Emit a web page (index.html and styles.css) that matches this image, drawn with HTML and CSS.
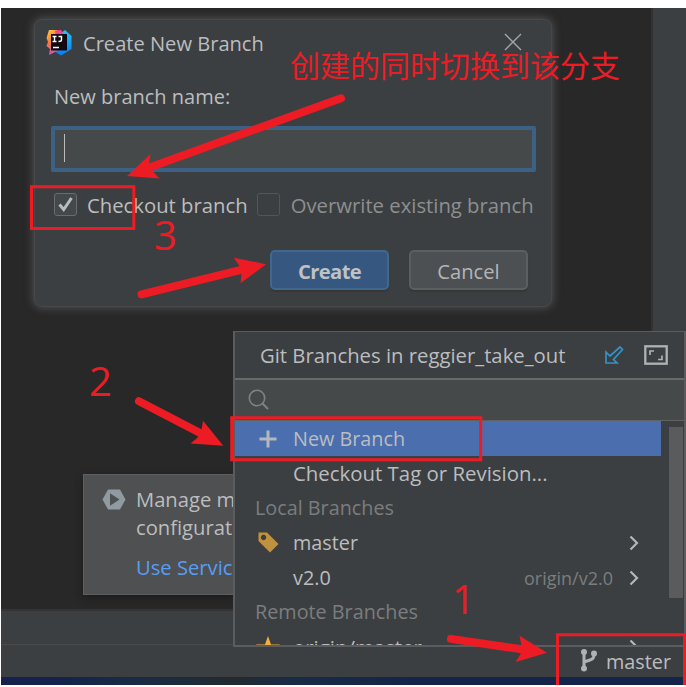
FILE: index.html
```html
<!DOCTYPE html>
<html lang="en">
<head>
<meta charset="utf-8">
<title>Create New Branch</title>
<link rel="stylesheet" href="styles.css">
</head>
<body>
<main class="ide">
  <div class="workspace">
    <div class="editor"></div>
    <div class="side-strip"></div>
  </div>
  <div class="tool-bar"></div>
  <footer class="status-bar">
    <svg class="branch-icon" width="18" height="24" viewBox="0 0 18 24">
      <path d="M4 4v16M14 5.500v1.500q0 4-4 5l-6 2" fill="none" stroke="#afb1b3" stroke-width="3"/>
      <circle cx="4" cy="4" r="3" fill="#afb1b3"/><circle cx="14" cy="5.500" r="3" fill="#afb1b3"/><circle cx="4" cy="20.500" r="3" fill="#afb1b3"/>
    </svg>
    <span class="branch-name">master</span>
  </footer>
  <div class="taskbar"></div>
</main>

<aside class="notice">
  <svg class="notice-icon" width="24" height="21" viewBox="0 0 24 21">
    <path d="M6 0.500h12l5.500 10L18 20.500H6L0.500 10.500z" fill="#8f9ba1"/>
    <path d="M8 4.200l9.500 6.200L8 16.700z" fill="#4e5052"/>
  </svg>
  <div class="notice-body">
    <p>Manage m</p>
    <p>configurat</p>
    <a class="notice-link">Use Servic</a>
  </div>
</aside>

<section class="dialog">
  <header class="dialog-title">
    <svg class="logo" width="26" height="27" viewBox="0 0 26 27">
      <defs>
        <linearGradient id="warm" x1="0" y1="0" x2="0.400" y2="1"><stop offset="0" stop-color="#fdd03b"/><stop offset="0.500" stop-color="#f97a3d"/><stop offset="1" stop-color="#c757bc"/></linearGradient>
        <linearGradient id="cool" x1="0" y1="0" x2="0" y2="1"><stop offset="0" stop-color="#21c8f5"/><stop offset="1" stop-color="#087cfa"/></linearGradient>
      </defs>
      <path d="M15 4l4-3 6.500 6v13L15 26.500l-6-4z" fill="url(#cool)"/>
      <path d="M3 1h8l3 4-3 17-8 4 1-6-3.500-3L2 13 .5 9z" fill="url(#warm)"/>
      <path d="M9 1.500l6-.5 3 5-8 3z" fill="#fe3f8f"/>
      <rect x="5" y="5" width="16" height="16.500" fill="#120a10"/>
      <path d="M6.500 7.500h4M8.500 7.500v5M6.500 12.500h4M12.500 7.500h3v3.500q0 1.500-3 1.500M7 18.500h6" fill="none" stroke="#fff" stroke-width="1.400"/>
    </svg>
    <h1>Create New Branch</h1>
    <svg class="close" width="18" height="18" viewBox="0 0 18 18"><path d="M1 1l16 16M17 1L1 17" stroke="#a3a5a6" stroke-width="1.400"/></svg>
  </header>
  <div class="dialog-body">
    <label class="name-label">New branch name:</label>
    <div class="name-input"><i class="caret"></i></div>
    <div class="checks">
      <span class="box"><svg width="21" height="21" viewBox="0 0 21 21"><path d="M4.500 10.500l4.200 5L16.500 4" fill="none" stroke="#b9bbbc" stroke-width="3"/></svg></span>
      <span class="check-label">Checkout branch</span>
      <span class="box box-off"></span>
      <span class="check-label label-off">Overwrite existing branch</span>
    </div>
    <div class="actions">
      <button class="btn btn-primary">Create</button>
      <button class="btn">Cancel</button>
    </div>
  </div>
</section>

<section class="popup">
  <header class="popup-head">
    <h2>Git Branches in reggier_take_out</h2>
    <svg class="fetch" width="20" height="20" viewBox="0 0 20 20"><path d="M2 7v11h11l-3.500-3.500L18.500 4.500 16 2 6 11z" fill="none" stroke="#3592c4" stroke-width="1.700"/><path d="M4 16L16 4.500" stroke="#3592c4" stroke-width="0"/></svg>
    <svg class="expand" width="24" height="20" viewBox="0 0 24 20"><rect x="1.300" y="1.300" width="21.400" height="17.400" fill="none" stroke="#afb1b3" stroke-width="2.300"/><path d="M6 10V6h4M18 10.500v4h-4" fill="none" stroke="#afb1b3" stroke-width="1.700"/></svg>
  </header>
  <div class="search">
    <svg width="21" height="21" viewBox="0 0 21 21"><circle cx="9" cy="9" r="7.700" fill="none" stroke="#7b8388" stroke-width="1.600"/><path d="M14 14l6 6" stroke="#7b8388" stroke-width="2"/></svg>
  </div>
  <div class="list">
    <div class="rows">
      <div class="row row-selected">
        <span class="icon"><svg width="18" height="18" viewBox="0 0 18 18"><path d="M9 .5v17M.5 9h17" stroke="#b4b7bd" stroke-width="3"/></svg></span>
        <span class="row-name">New Branch</span>
      </div>
      <div class="row"><span class="icon"></span><span class="row-name row-wide">Checkout Tag or Revision...</span></div>
      <div class="row row-group">Local Branches</div>
      <div class="row">
        <span class="icon"><svg width="21" height="21" viewBox="0 0 21 21"><path fill-rule="evenodd" d="M.5.500H9L20.500 12 12 20.500.5 9zM5.500 2.800a2.700 2.700 0 1 0 .1 0z" fill="#c0913f"/></svg></span>
        <span class="row-name">master</span>
        <svg class="chevron" width="10" height="16" viewBox="0 0 10 16"><path d="M1.500 1.500L8 8l-6.500 6.500" fill="none" stroke="#b4b6b8" stroke-width="2.200"/></svg>
      </div>
      <div class="row">
        <span class="icon"></span><span class="row-name">v2.0</span><span class="tracked">origin/v2.0</span>
        <svg class="chevron" width="10" height="16" viewBox="0 0 10 16"><path d="M1.500 1.500L8 8l-6.500 6.500" fill="none" stroke="#b4b6b8" stroke-width="2.200"/></svg>
      </div>
      <div class="row row-group">Remote Branches</div>
      <div class="row">
        <span class="icon"><svg width="24" height="23" viewBox="0 0 24 23"><path d="M12 0l3 8.500h9l-7.200 5.500L19.400 23 12 17.600 4.600 23l2.600-9L0 8.500h9z" fill="#f4af3d"/></svg></span>
        <span class="row-name row-wide">origin/master</span>
        <svg class="chevron" width="10" height="16" viewBox="0 0 10 16"><path d="M1.500 1.500L8 8l-6.500 6.500" fill="none" stroke="#b4b6b8" stroke-width="2.200"/></svg>
      </div>
    </div>
    <div class="scroll"><div class="thumb"></div></div>
  </div>
</section>

<svg class="marks" width="686" height="687" viewBox="0 0 686 687">
  <g fill="none" stroke="#ed1c24" stroke-width="3">
    <path d="M31.500 186.800h102.300v41.700H31.500zM231.700 417.800h249v42h-249zM557.500 685V634.800H684.500V685"/>
  </g>
  <g fill="none" stroke="#ed1c24" stroke-width="8" stroke-linecap="round">
    <path d="M341 98.300L148 168M141.500 294.300L244 269.200M139 401.200L203 434.500M451 638.900L525 649.800"/>
  </g>
  <g fill="#ed1c24">
    <path d="M127 176l23.500-22-1.500 9.500 4 8 6.500 7zM266 264.300l-32.200-6.600 5.700 8.300 2 7.500-1 9.800zM223.300 445.700l-20.300-25-1.500 9-4 8-7 5.800zM547 652.700l-27.500-17 2 9.500-1 9-5 7.800z"/>
  </g>
</svg>
<span class="note note-text">创建的同时切换到该分支</span>
<span class="note note-three">3</span>
<span class="note note-two">2</span>
<span class="note note-one">1</span>
</body>
</html>
```
FILE: styles.css
```css
* { box-sizing: border-box; margin: 0; padding: 0; }
body {
  width: 686px; height: 687px; overflow: hidden; position: relative;
  background: #fff; color: #bbbdbf;
  font: 20.2px/30px "Open Sans", "Noto Sans CJK SC", sans-serif;
  white-space: nowrap;
}
svg { display: block; flex: none; }

.ide { display: flex; flex-direction: column; height: 685px; padding: 8px 0 0 1px; }
.workspace { display: flex; flex: 1; }
.editor { width: 652px; background: #282828; border-right: 2px solid #323232; }
.side-strip { flex: 1; background: #3c3f41; }
.tool-bar { height: 35px; background: #3c3f41; border-top: 2px solid #323435; }
.status-bar {
  display: flex; align-items: center; gap: 8px; height: 33px;
  padding: 0 15px 0 0; justify-content: flex-end;
  background: #3c3f41; border-top: 1px solid #4b4b4b; font-size: 19.8px;
}
.branch-icon { margin-top: -2px; }
.branch-name { margin-top: 1px; }
.taskbar { height: 8px; background: linear-gradient(90deg, #14224d 8%, #192c45 20%, #222a30 34%, #192c45 42%, #14244b 60%); }

.notice {
  position: absolute; left: 83px; top: 474px; width: 151px; height: 121px;
  display: flex; gap: 10px; padding: 10px 0 0 18px; overflow: hidden;
  background: #4e5052; border: 1px solid #5c5e60; box-shadow: 0 3px 7px #1b1b1b;
  line-height: 28px;
}
.notice-icon { margin-top: 4px; }
.notice-link { display: block; margin-top: 12px; color: #589df6; }

.dialog {
  position: absolute; left: 34px; top: 19px; width: 518px; height: 288px;
  background: #3c3f41; border: 1px solid #474849; border-radius: 8px;
  box-shadow: 0 0 9px 1px #515151;
}
.dialog-title { display: flex; align-items: center; height: 47px; padding: 0 29px 0 11px; }
.logo { margin-top: -3px; }
h1, h2 { font-size: 20.1px; font-weight: 400; }
h1 { flex: 1; margin-left: 11px; }
.close { margin-top: -3px; }
.dialog-body { padding: 15px 15px 0 16px; }
.name-label { display: block; margin-left: 3px; font-size: 20px; }
.name-input {
  height: 46px; margin-top: 14px; padding: 4px 9px;
  background: #45494a; border: 4px solid #3d6185; border-radius: 2px;
}
.caret { display: block; width: 1px; height: 28px; background: #bbb; }
.checks { display: flex; align-items: center; height: 23px; margin: 21px 0 0 3px; }
.box { width: 23px; height: 23px; border: 1px solid #6b6b6b; border-radius: 3px; background: #43494a; }
.box-off { margin-left: 9px; background: #3c3f41; border-color: #545556; }
.check-label { margin-left: 10px; font-size: 20.3px; }
.label-off { margin-left: 11px; color: #8d8f90; }
.actions { display: flex; justify-content: flex-end; gap: 20px; margin: 34px 8px 0 0; }
.btn {
  width: 119px; height: 40px; padding-top: 1px;
  font: inherit; color: #b3b5b6; background: #4c5052;
  border: 2px solid #5c5f60; border-radius: 5px; box-shadow: 0 2px 1px #353739;
}
.btn-primary { font-weight: 700; letter-spacing: -.6px; background: #365880; border-color: #41688c; color: #bfc1c4; }

.popup {
  position: absolute; left: 233px; top: 331px; width: 453px; height: 316px;
  display: flex; flex-direction: column; overflow: hidden;
  background: #3c3f41; border: 2px solid #5a5c5e; border-top-width: 1px;
}
.popup-head { display: flex; align-items: center; height: 46px; padding: 0 16px 0 25px; }
h2 { flex: 1; font-size: 20.3px; }
.fetch { margin-right: 20px; }
.search { height: 43px; padding: 9px 13px; background: #45494a; border-top: 2px solid #67696a; border-bottom: 1px solid #606263; }
.list { display: flex; flex: 1; min-height: 0; overflow: hidden; }
.rows { width: 426px; }
.row { display: flex; align-items: center; height: 34.8px; padding: 0 22px 0 20px; font-size: 19.8px; }
.row-selected { background: #4b6eaf; padding-top: 1px; }
.row-group { color: #7b7d7e; font-size: 19.8px; }
.row .row-wide { font-size: 20.4px; }
.icon { width: 26px; display: flex; justify-content: center; margin-right: 12px; }
.row-name { flex: 1; }
.tracked { color: #7b7d7e; font-size: 18px; margin-right: 16px; }
.scroll { flex: 1; padding: 6px 1px 0 8px; }
.thumb { height: 171px; background: #595b5d; }

.marks { position: absolute; left: 0; top: 0; }
.note { position: absolute; color: #ed1c24; font-size: 40px; line-height: 40px; }
.note-text { left: 290px; top: 44px; font: 400 30px/40px "Noto Sans CJK SC", sans-serif; }
.note-three { left: 154px; top: 215px; }
.note-two { left: 89px; top: 361px; }
.note-one { left: 452px; top: 579px; }
```
